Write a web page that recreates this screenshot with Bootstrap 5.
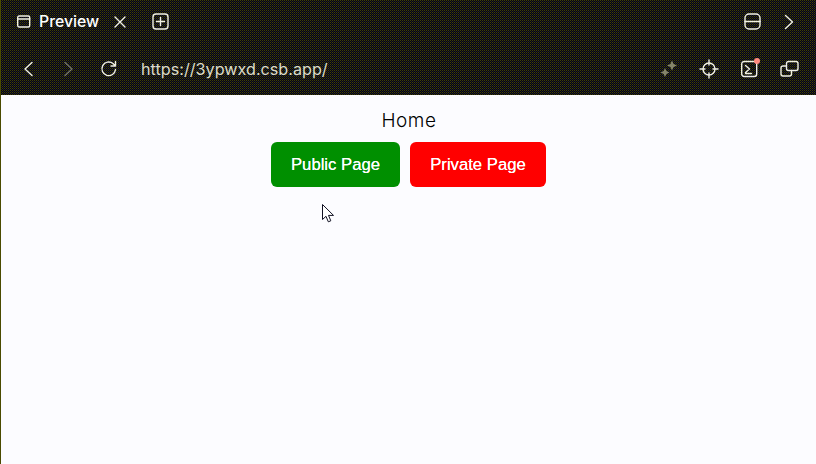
<!DOCTYPE html>
<html lang="en">
<head>
<meta charset="utf-8">
<title>Preview</title>
<link href="https://cdn.jsdelivr.net/npm/bootstrap@5.3.0/dist/css/bootstrap.min.css" rel="stylesheet">
<style>
html, body { height: 100%; }
body { background: #fcfcff; font-family: "Liberation Sans", Arial, sans-serif; overflow: hidden; border-left: 1px solid #4a4a00; }
.ide-chrome { height: 95px; margin-left: -1px; background-color: #181812; background-image: conic-gradient(#0a0a04 25%, #181834 0 50%, #0a0a04 0 75%, #3a3a10 0); background-size: 2px 2px; color: #f0f0e4; font-family: Inter, "Liberation Sans", sans-serif; }
.tab-row { height: 43px; padding: 0 22px 0 17px; }
.url-row { height: 52px; padding: 0 17px 0 23px; }
.tab-title { font-size: 15.8px; font-weight: 500; color: #fff; margin-left: 8px; width: 75px; }
.url-text { font-size: 16.2px; color: #dcdcc8; margin-left: 23px; font-family: Inter, sans-serif; }
.ico { display: block; flex: none; fill: none; stroke: currentColor; stroke-width: 1.4; stroke-linecap: round; stroke-linejoin: round; }
.gap-close { margin-right: 26px; }
.gap-back { margin-right: 29px; }
.gap-fwd { margin-right: 26px; }
.dim { opacity: .4; }
.sparkle { color: #85856a; margin-right: 20px; }
.cross-ico { margin-right: 22px; }
.term-wrap { margin-right: 21px; }
.pane-gap { gap: 23px; }
.home-title { font-family: Inter, sans-serif; font-size: 19px; font-weight: 300; line-height: 22px; color: #000; text-align: center; margin: 0; padding-left: 1px; letter-spacing: .5px; padding-top: 15px; }
.act-row { gap: 10px; margin-top: 10px; }
.act-btn { font-family: "Liberation Sans", Arial, sans-serif; font-size: 16.7px; height: 45px; line-height: 45px; border: 0; border-radius: 6px; color: #fff; text-shadow: 0 0 .5px #fff; }
.act-green { background: #008f00; width: 129px; }
.act-red { background: #ff0000; width: 136px; }
.cursor-mark { position: absolute; left: 322px; top: 204px; }
.notify-dot { width: 6px; height: 6px; background: #ff8a80; top: -2px; right: -1px; }
</style>
</head>
<body>
<header class="ide-chrome">
  <div class="tab-row d-flex align-items-center">
    <svg class="ico" width="14" height="14" viewBox="0 0 14 14"><rect x=".7" y="1" width="12" height="11" rx="1.500"/><path d="M.7 4h12"/></svg>
    <span class="tab-title">Preview</span>
    <svg class="ico gap-close" width="12" height="12" viewBox="0 0 12 12"><path d="M1 1l10 10M11 1L1 11"/></svg>
    <svg class="ico" width="17" height="17" viewBox="0 0 17 17"><rect x="1" y="1" width="15" height="15" rx="3"/><path d="M8.500 4.500v8M4.500 8.500h8"/></svg>
    <div class="ms-auto d-flex align-items-center pane-gap">
      <svg class="ico" width="17" height="17" viewBox="0 0 17 17"><rect x="1" y="1" width="15" height="15" rx="4"/><path d="M1 8.500h15"/></svg>
      <svg class="ico" width="10" height="16" viewBox="0 0 10 16"><path d="M1.500 1.500L8.500 8l-7 6.500"/></svg>
    </div>
  </div>
  <div class="url-row d-flex align-items-center">
    <svg class="ico gap-back" width="11" height="16" viewBox="0 0 11 16"><path d="M9 1.500L2 8l7 6.500"/></svg>
    <svg class="ico gap-fwd dim" width="11" height="16" viewBox="0 0 11 16"><path d="M2 1.500L9 8l-7 6.500"/></svg>
    <svg class="ico" width="18" height="18" viewBox="0 0 18 18"><path d="M15.500 9.500A6.800 6.800 0 1 1 13 3.500L15.500 6M15.500 1.500V6H11"/></svg>
    <span class="url-text">https://3ypwxd.csb.app/</span>
    <div class="ms-auto d-flex align-items-center">
      <svg class="ico sparkle" width="20" height="20" viewBox="0 0 20 20"><path d="M13 1.500l1.600 3.400L18 6.500l-3.400 1.600L13 11.500l-1.600-3.400L8 6.500l3.400-1.600zM6 9l1.400 3.100L10.500 13.500l-3.100 1.400L6 18l-1.400-3.100L1.500 13.500l3.100-1.400z" style="fill:currentColor;stroke:none"/></svg>
      <svg class="ico cross-ico" width="20" height="20" viewBox="0 0 20 20"><circle cx="10" cy="10" r="6"/><path d="M10 1v5M10 14v5M1 10h5M14 10h5"/></svg>
      <div class="position-relative term-wrap">
        <svg class="ico" width="18" height="18" viewBox="0 0 18 18"><rect x=".7" y="1.500" width="15" height="15" rx="2.500"/><path d="M4.500 5.500l4 3.500-4 3.500M4.500 13.500h6"/></svg>
        <span class="position-absolute rounded-circle notify-dot"></span>
      </div>
      <svg class="ico" width="19" height="18" viewBox="0 0 19 18"><rect x="6.500" y="1.500" width="11.500" height="9" rx="2"/><path d="M6.500 6H3a2 2 0 0 0-2 2v6a2 2 0 0 0 2 2h6.500a2 2 0 0 0 2-2v-3.500"/></svg>
    </div>
  </div>
</header>
<main>
  <h1 class="home-title">Home</h1>
  <div class="act-row d-flex justify-content-center">
    <a class="act-btn act-green btn p-0 text-center" href="#">Public Page</a>
    <a class="act-btn act-red btn p-0 text-center" href="#">Private Page</a>
  </div>
</main>
<svg class="cursor-mark" width="13" height="20" viewBox="0 0 13 20"><path d="M.500.500v15l3.500-3.200 2.300 5.500 2.500-1-2.300-5.400h5z" fill="#fff" stroke="#112" stroke-width="1"/></svg>
</body>
</html>
